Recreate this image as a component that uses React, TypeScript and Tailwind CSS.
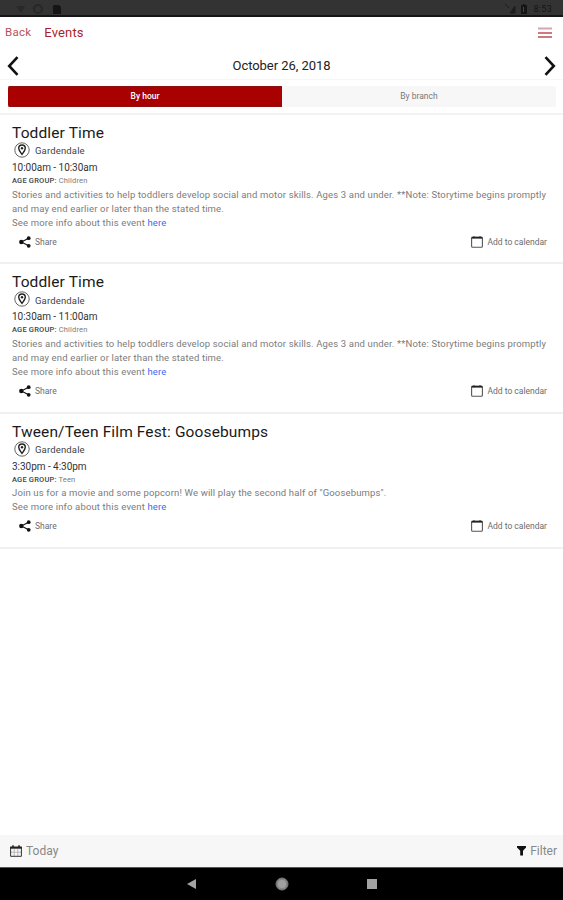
import React from "react";

type EventItem = {
  title: string;
  time: string;
  ageGroup: string;
  lines: string[];
};

const toddlerLines = [
  "Stories and activities to help toddlers develop social and motor skills. Ages 3 and under. **Note: Storytime begins promptly",
  "and may end earlier or later than the stated time.",
];

const events: EventItem[] = [
  { title: "Toddler Time", time: "10:00am - 10:30am", ageGroup: "Children", lines: toddlerLines },
  { title: "Toddler Time", time: "10:30am - 11:00am", ageGroup: "Children", lines: toddlerLines },
  {
    title: "Tween/Teen Film Fest: Goosebumps",
    time: "3:30pm - 4:30pm",
    ageGroup: "Teen",
    lines: ['Join us for a movie and some popcorn! We will play the second half of "Goosebumps".'],
  },
];

function Chevron({ flip = false }: { flip?: boolean }) {
  return (
    <svg width="12" height="20" viewBox="0 0 12 20" className={flip ? "rotate-180" : ""}>
      <path d="M10.5 1.2 2.2 10l8.3 8.8" fill="none" stroke="#111" strokeWidth="2.6" />
    </svg>
  );
}

function PinIcon() {
  return (
    <svg width="16" height="16" viewBox="0 0 16 16" className="mb-[2px] shrink-0">
      <circle cx="8" cy="8" r="7.2" fill="none" stroke="#555" strokeWidth="0.9" />
      <path d="M8 12.4C6.6 10.4 4.7 8.2 4.7 6.3a3.3 3.3 0 0 1 6.6 0c0 1.9-1.9 4.1-3.3 6.1Z" fill="none" stroke="#222" strokeWidth="1.4" />
      <circle cx="8" cy="6.2" r="1.2" fill="#222" />
    </svg>
  );
}

function ShareIcon() {
  return (
    <svg width="12" height="12" viewBox="0 0 12 12" className="shrink-0">
      <path d="M9.7 2.2 2.3 6l7.4 3.8" fill="none" stroke="#111" strokeWidth="1.1" />
      <circle cx="9.7" cy="2.2" r="1.9" fill="#111" />
      <circle cx="2.3" cy="6" r="2.2" fill="#111" />
      <circle cx="9.7" cy="9.8" r="1.9" fill="#111" />
    </svg>
  );
}

function CalendarIcon() {
  return (
    <svg width="12" height="12" viewBox="0 0 12 12" className="shrink-0">
      <rect x="0.6" y="1.2" width="10.8" height="10" rx="1" fill="none" stroke="#555" strokeWidth="1.1" />
      <path d="M0.6 1.7h10.8" stroke="#222" strokeWidth="1.8" />
      <path d="M3 0.2v2M9 0.2v2" stroke="#222" strokeWidth="1" />
    </svg>
  );
}

function TodayIcon() {
  return (
    <svg width="12" height="12" viewBox="0 0 12 12" className="shrink-0">
      <path d="M4.2 4v7M7.8 4v7M0.6 7.2h10.8" fill="none" stroke="#aaa" strokeWidth="0.8" />
      <path d="M0.6 2v9.3h10.8V2" fill="none" stroke="#333" strokeWidth="1" />
      <path d="M0.2 1.5h11.6v2.2H0.2z" fill="#222" />
      <path d="M3 0.2v2.2M9 0.2v2.2" stroke="#222" strokeWidth="1.5" />
    </svg>
  );
}

function EventCard({ event }: { event: EventItem }) {
  return (
    <article className="border-b-2 border-[#f0f0f0] px-3 pt-[9px] pb-[14.7px] text-[#7c7c7c]">
      <h2 className="h-[18px] text-[15.5px] leading-[18px] tracking-[0.13px] text-[#1a1a1a]">{event.title}</h2>
      <div className="flex h-[18px] items-center pl-[2px]">
        <PinIcon />
        <span className="ml-[5px] pt-px text-[9.5px] tracking-[0.15px] text-[#444]">Gardendale</span>
      </div>
      <p className="h-[14px] pt-px text-[10px] leading-[14px] tracking-[-0.03px] text-[#333]">{event.time}</p>
      <p className="h-[13.6px] text-[7.5px] leading-[13px] tracking-[0.18px]">
        <span className="font-medium text-[#444]">AGE GROUP:</span> {event.ageGroup}
      </p>
      {event.lines.map((line) => (
        <p key={line} className="text-[9.5px] leading-[14px] tracking-[0.15px] whitespace-nowrap">{line}</p>
      ))}
      <p className="text-[9.5px] leading-[14px] tracking-[0.15px]">
        See more info about this event <a className="text-[#3f68f0]">here</a>
      </p>
      <div className="mt-[6px] flex h-3 items-center justify-between pr-1 pl-[7px] text-[8.5px] text-[#6c6c6c]">
        <button className="flex items-center gap-1">
          <ShareIcon />
          <span className="pt-px">Share</span>
        </button>
        <button className="flex items-center gap-1">
          <CalendarIcon />
          <span className="pt-px">Add to calendar</span>
        </button>
      </div>
    </article>
  );
}

export default function App() {
  return (
    <div className="flex h-[900px] w-[563px] flex-col overflow-hidden bg-white font-[Roboto,sans-serif]">
      <div className="flex h-[17px] shrink-0 items-center justify-between border-b-2 border-[#151515] bg-[#333] pr-[11px] pl-[15px] text-[#151515]">
        <svg width="48" height="12" viewBox="0 0 48 12" className="mt-[2px]">
          <path d="M1 3h9L6 10Z" fill="#292929" />
          <circle cx="23" cy="6" r="4" fill="none" stroke="#272727" strokeWidth="2" />
          <path d="M39 2h5l2 2v7h-8V3Z" fill="#151515" />
        </svg>
        <div className="mt-[2px] flex items-center gap-[5px]">
          <svg width="24" height="11" viewBox="0 0 24 11">
            <path d="m1 1 4 4M6 10 11 3v7Z" stroke="#1d1d1d" fill="#1d1d1d" />
            <path d="M17 2h2V1h2v1h2v9h-6Z" fill="#151515" />
            <path d="M19.5 4v5" stroke="#444" />
          </svg>
          <span className="pt-px text-[9px] leading-none tracking-[0.3px]">8:53</span>
        </div>
      </div>

      <header className="flex h-[34px] shrink-0 items-center justify-between pr-[11px] pb-[2px] pl-[5px] text-[#a91f2b]">
        <div className="flex items-center gap-[13px]">
          <span className="text-[11.5px] tracking-[0.25px] opacity-80">Back</span>
          <h1 className="text-[13px] tracking-[0.15px]">Events</h1>
        </div>
        <svg width="14" height="12" viewBox="0 0 14 12">
          <path d="M0 1.5h14" stroke="#d8a5ad" strokeWidth="2" />
          <path d="M0 6h14M0 10h14" stroke="#bd4d5a" strokeWidth="1.6" />
        </svg>
      </header>

      <div className="flex h-[29px] shrink-0 items-center justify-between border-b border-[#f6f6f6] pt-[2px] pr-[7px] pl-[7px]">
        <Chevron />
        <span className="text-[13px] tracking-[-0.05px] text-[#222]">October 26, 2018</span>
        <Chevron flip />
      </div>

      <div className="shrink-0 border-b-2 border-[#f3f3f3] pt-[6px] pr-[7px] pb-[6px] pl-2">
        <div className="flex h-[21px] overflow-hidden rounded-[2px] bg-[#f7f7f7] text-[8.5px]">
          <div className="flex flex-1 items-center justify-center border-y border-[#8f1010] bg-[#a90000] font-medium text-white">By hour</div>
          <div className="flex flex-1 items-center justify-center text-[#777]">By branch</div>
        </div>
      </div>

      <main className="flex-1">
        {events.map((event) => (
          <EventCard key={event.time} event={event} />
        ))}
      </main>

      <footer className="flex h-[32px] shrink-0 items-center justify-between bg-[#f7f7f7] pr-[6px] pl-[10px] text-[12px] text-[#888]">
        <div className="flex items-center gap-1">
          <TodayIcon />
          <span>Today</span>
        </div>
        <div className="flex items-center gap-1">
          <svg width="9" height="10" viewBox="0 0 9 10">
            <path d="M0 0h9v1.5L6 4.7V9.5H3.2V4.7L0 1.5Z" fill="#111" />
          </svg>
          <span>Filter</span>
        </div>
      </footer>

      <nav className="flex h-[33px] shrink-0 items-center justify-center gap-[76px] border-t border-[#555] bg-black">
        <svg width="14" height="14" viewBox="0 0 14 14"><path d="M11 2v10L2 7Z" fill="#a3a3a3" /></svg>
        <svg width="14" height="14" viewBox="0 0 14 14"><circle cx="7" cy="7" r="6" fill="#858585" stroke="#777" /><circle cx="7" cy="7" r="4" fill="#a0a0a0" /></svg>
        <svg width="14" height="14" viewBox="0 0 14 14"><path d="M2 2h10v10H2z" fill="#a3a3a3" /></svg>
      </nav>
    </div>
  );
}
